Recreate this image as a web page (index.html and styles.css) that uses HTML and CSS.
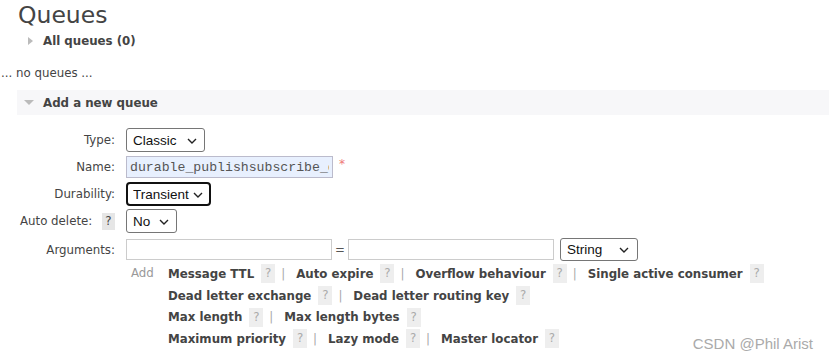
FILE: index.html
```html
<!DOCTYPE html>
<html>
<head>
	<meta charset="utf-8">
	<meta name="viewport" content="width=device-width">
	<title>Queues</title>
	<link rel="stylesheet" href="styles.css">
</head>
<body>
	<div class="page">
		<h1 class="title">Queues</h1>
		<div class="toggle"><span class="arrow right"></span>All queues (0)</div>
		<p class="empty">... no queues ...</p>

		<div class="section-head"><span class="arrow down"></span>Add a new queue</div>
		<form class="queue-form">
			<div class="row">
				<label class="label">Type:</label>
				<div class="field">
					<span class="select w-classic">
						<select><option>Classic</option><option>Quorum</option></select>
						<svg class="chev" width="10" height="6" viewBox="0 0 10 6"><path d="M1 1 L5 5 L9 1" fill="none" stroke="#222" stroke-width="1.4"/></svg>
					</span>
				</div>
			</div>
			<div class="row row-name">
				<label class="label">Name:</label>
				<div class="field">
					<input class="text name" type="text" value="durable_publishsubscribe_queue">
					<span class="mandatory">*</span>
				</div>
			</div>
			<div class="row row-durability">
				<label class="label">Durability:</label>
				<div class="field">
					<span class="select w-transient focused">
						<select><option>Transient</option><option>Durable</option></select>
						<svg class="chev" width="10" height="6" viewBox="0 0 10 6"><path d="M1 1 L5 5 L9 1" fill="none" stroke="#222" stroke-width="1.4"/></svg>
					</span>
				</div>
			</div>
			<div class="row row-autodelete">
				<label class="label">Auto delete: <span class="help dark">?</span></label>
				<div class="field">
					<span class="select w-no">
						<select><option>No</option><option>Yes</option></select>
						<svg class="chev" width="10" height="6" viewBox="0 0 10 6"><path d="M1 1 L5 5 L9 1" fill="none" stroke="#222" stroke-width="1.4"/></svg>
					</span>
				</div>
			</div>
			<div class="row row-args">
				<label class="label">Arguments:</label>
				<div class="field">
					<div class="arg-line">
						<input class="text arg" type="text">
						<span class="eq">=</span>
						<input class="text arg" type="text">
						<span class="select w-string">
							<select><option>String</option><option>Number</option><option>Boolean</option><option>List</option></select>
							<svg class="chev" width="10" height="6" viewBox="0 0 10 6"><path d="M1 1 L5 5 L9 1" fill="none" stroke="#222" stroke-width="1.4"/></svg>
						</span>
					</div>
					<div class="arg-help">
						<span class="add">Add</span>
						<div class="shortcuts">
							<div class="line">
								<span class="key">Message TTL</span><span class="help">?</span><span class="sep">|</span>
								<span class="key">Auto expire</span><span class="help">?</span><span class="sep">|</span>
								<span class="key">Overflow behaviour</span><span class="help">?</span><span class="sep">|</span>
								<span class="key">Single active consumer</span><span class="help">?</span>
							</div>
							<div class="line">
								<span class="key">Dead letter exchange</span><span class="help">?</span><span class="sep">|</span>
								<span class="key">Dead letter routing key</span><span class="help">?</span>
							</div>
							<div class="line">
								<span class="key">Max length</span><span class="help">?</span><span class="sep">|</span>
								<span class="key">Max length bytes</span><span class="help">?</span>
							</div>
							<div class="line">
								<span class="key">Maximum priority</span><span class="help">?</span><span class="sep">|</span>
								<span class="key">Lazy mode</span><span class="help">?</span><span class="sep">|</span>
								<span class="key">Master locator</span><span class="help">?</span>
							</div>
						</div>
					</div>
				</div>
			</div>
		</form>
	</div>
	<div class="watermark">CSDN @Phil Arist</div>
</body>
</html>
```

FILE: styles.css
```css
* {
	box-sizing: border-box;
}

body {
	background: #fff;
	color: #444;
	font-family: "DejaVu Sans", Verdana, sans-serif;
	font-size: 11.8px;
	margin: 0;
}

.page {
	padding-top: 2px;
}

.title {
	font-size: 23.5px;
	font-weight: normal;
	line-height: 26px;
	margin: 0 0 0 18px;
}

.toggle, .section-head {
	align-items: center;
	display: flex;
	font-weight: bold;
	height: 25px;
	margin-left: 17px;
	padding-left: 26px;
	position: relative;
}

.section-head {
	background: #f7f7f9;
	margin-top: 9px;
}

.arrow {
	height: 0;
	position: absolute;
	width: 0;
}
.arrow.right {
	border-bottom: 4px solid transparent;
	border-left: 5px solid #bbb;
	border-top: 4px solid transparent;
	left: 11px;
}
.arrow.down {
	border-left: 5px solid transparent;
	border-right: 5px solid transparent;
	border-top: 5px solid #bbb;
	left: 7px;
}

.empty {
	line-height: 16px;
	margin: 12px 0 0 1px;
}

.queue-form {
	padding-top: 13px;
}

.row {
	align-items: center;
	display: flex;
	margin-bottom: 4px;
}
.row-durability {
	margin-bottom: 3px;
}
.row-autodelete {
	margin-bottom: 5px;
}
.row-args {
	align-items: flex-start;
}

.label {
	flex: 0 0 116px;
	padding-right: 1px;
	text-align: right;
}
.row-args .label {
	padding-top: 5px;
}

.field {
	align-items: center;
	display: flex;
	margin-left: 10px;
}
.row-args .field {
	align-items: flex-start;
	flex-direction: column;
}

.select {
	display: inline-block;
	height: 24px;
	position: relative;
}
.select select {
	appearance: none;
	background: #fff;
	border: 1px solid #767676;
	border-radius: 3px;
	color: #111;
	font-family: "Liberation Sans", Arial, sans-serif;
	font-size: 13.5px;
	height: 100%;
	padding: 0 0 0 6px;
	width: 100%;
}
.select.focused select {
	border: 2px solid #111;
	border-radius: 4px;
	padding-left: 5px;
}
.chev {
	pointer-events: none;
	position: absolute;
	right: 8px;
	top: 10px;
}
.w-classic { width: 79px; }
.w-transient { width: 85px; }
.w-no { width: 51px; }
.w-string { height: 23px; margin-left: 6px; width: 78px; }
.w-string .chev { top: 9px; right: 9px; }

.text {
	background: #fff;
	border: 1px solid #ccc;
	height: 21px;
	padding: 0 3px;
}
.name {
	background: #e8f0fe;
	border-color: #bbc;
	color: #555;
	font-family: "Liberation Mono", "Courier New", monospace;
	font-size: 13.2px;
	height: 22px;
	width: 207px;
}
.mandatory {
	color: #e77;
	font-size: 12px;
	margin: -7px 0 0 6px;
}

.arg-line {
	align-items: center;
	display: flex;
	height: 23px;
}
.arg {
	width: 206px;
}
.eq {
	color: #555;
	text-align: center;
	width: 16px;
}

.help {
	background: #eee;
	color: #aaa;
	display: inline-block;
	font-weight: normal;
	line-height: 19px;
	margin: 0 6px 0 7px;
	text-align: center;
	width: 14px;
}
.help.dark {
	background: #e6e6e6;
	color: #444;
	line-height: 17px;
	margin: 0 0 0 6px;
	width: 13px;
}

.arg-help {
	display: flex;
	margin-top: 2px;
}
.add {
	color: #999;
	line-height: 16px;
	margin-top: 2px;
	padding-left: 5px;
	width: 42px;
}
.line {
	align-items: center;
	display: flex;
	height: 21.7px;
}
.key {
	font-weight: bold;
}
.sep {
	color: #aaa;
	margin-right: 11px;
}

.watermark {
	bottom: 5px;
	color: #aaa;
	font-family: "Liberation Sans", Arial, sans-serif;
	font-size: 15px;
	position: absolute;
	right: 16px;
}
```
